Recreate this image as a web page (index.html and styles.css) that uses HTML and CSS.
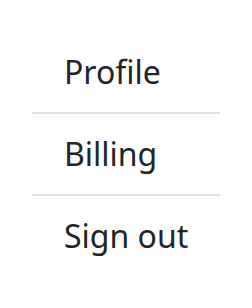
FILE: index.html
```html
<!DOCTYPE html>
<html lang="en">

<head>
    <meta charset="UTF-8">
    <meta name="viewport" content="width=device-width, initial-scale=1.0">
    <title>Account menu</title>
    <link rel="stylesheet" href="styles.css">
</head>

<body>
    <ul class="menu">
        <li class="menuItem">Profile</li>
        <li class="menuItem">Billing</li>
        <li class="menuItem">Sign out</li>
    </ul>
</body>

</html>
```

FILE: styles.css
```css
body {
    margin: 0;
    background: #ffffff;
    font-family: "Noto Sans", "Open Sans", sans-serif;
}
.menu {
    list-style: none;
    margin: 0;
    padding: 32px;
}
.menuItem {
    font-size: 32px;
    line-height: 48px;
    padding: 16px 32px;
    color: #212529;
    white-space: nowrap;
    border-bottom: 2px solid #dee2e6;
}
.menuItem:last-child {
    border-bottom: none;
}
```
